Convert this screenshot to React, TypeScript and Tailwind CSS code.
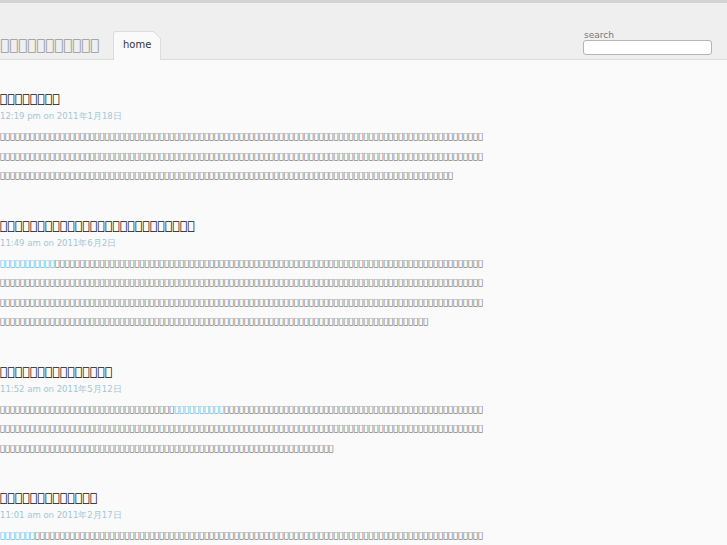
import React from "react";

// CJK Extension G ideographs: no installed font carries them, so they show as empty boxes
let seed = 0;
const zh = (n: number) => {
  let s = "";
  for (let i = 0; i < n; i++) {
    seed = (seed * 37 + 11) % 4000;
    s += String.fromCodePoint(0x30000 + seed);
  }
  return s;
};

type Part = { text: string; link?: boolean };

const posts: { title: string; time: string; date: string; body: Part[] }[] = [
  {
    title: zh(8),
    time: "12:19 pm on 2011",
    date: "年1月18日",
    body: [{ text: zh(285) }],
  },
  {
    title: zh(26),
    time: "11:49 am on 2011",
    date: "年6月2日",
    body: [{ text: zh(11), link: true }, { text: zh(366) }],
  },
  {
    title: zh(15),
    time: "11:52 am on 2011",
    date: "年5月12日",
    body: [{ text: zh(35) }, { text: zh(10), link: true }, { text: zh(216) }],
  },
  {
    title: zh(13),
    time: "11:01 am on 2011",
    date: "年2月17日",
    body: [{ text: zh(7), link: true }, { text: zh(200) }],
  },
];

const siteTitle = zh(11);

function Header() {
  return (
    <header className="flex h-[60px] items-end border-t-[3px] border-b border-t-[#d3d3d3] border-b-[#dcdcdc] bg-[#efefef]">
      <h1 className="mb-[5px] whitespace-nowrap text-[15px] leading-[18px] text-[#999]">
        {siteTitle}
      </h1>
      <nav className="ml-[14px] -mb-px">
        <div className="relative h-[29px] w-[48px] rounded-tl-[3px] border border-b-0 border-[#dcdcdc] bg-[#fafafa] pt-[6px] pl-[9px] text-[10px] leading-[14px] text-[#333]">
          home
          <span className="absolute -top-px -right-px h-[8px] w-[8px] bg-[linear-gradient(to_top_right,#fafafa_calc(50%-0.6px),#dcdcdc_50%,#efefef_calc(50%+0.6px))]" />
        </div>
      </nav>
      <div className="mb-[4px] ml-auto mr-[15px] flex flex-col">
        <label className="pl-px text-[9px] leading-[10px] text-[#777]">search</label>
        <input className="h-[15px] w-[129px] rounded-[3px] border border-[#b4b4b4] bg-white outline-none" />
      </div>
    </header>
  );
}

export default function App() {
  return (
    <div className="min-h-screen bg-[#fafafa] font-['DejaVu_Sans',sans-serif]">
      <Header />
      <main className="flex w-[486px] flex-col gap-[32px] pt-[31px]">
        {posts.map((p, i) => (
          <article key={i}>
            <h2 className="text-[12.5px] leading-[16px] text-[#111]">{p.title}</h2>
            <div className="mt-[3px] text-[8.5px] leading-[12px] text-[#a3c6d6]">
              {p.time}
              {p.date}
            </div>
            <p className="mt-[5px] break-all text-[8.3px] leading-[19.5px] text-[#555]">
              {p.body.map((part, j) =>
                part.link ? (
                  <a
                    key={j}
                    href="#"
                    className="text-[#1eaee8] underline decoration-dotted decoration-[#1eaee8]"
                  >
                    {part.text}
                  </a>
                ) : (
                  <span key={j}>{part.text}</span>
                )
              )}
            </p>
          </article>
        ))}
      </main>
    </div>
  );
}
